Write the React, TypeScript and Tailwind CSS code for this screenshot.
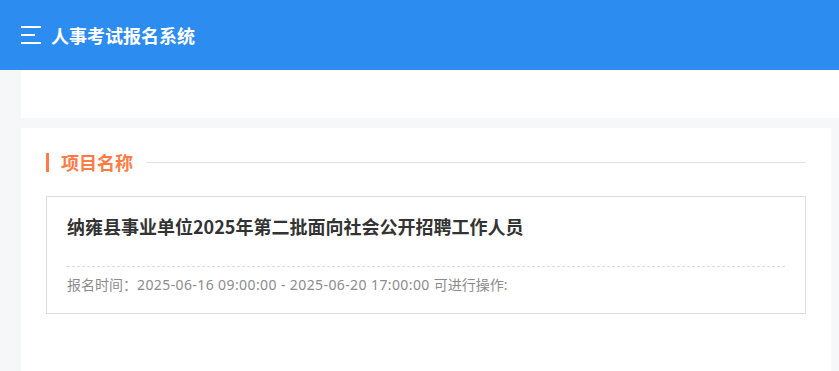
const cjk = { fontFamily: '"Noto Sans CJK SC", "Microsoft YaHei", sans-serif' };
const latinFirst = { fontFamily: '"Noto Sans", "Noto Sans CJK SC", "Microsoft YaHei", sans-serif' };

function MenuIcon() {
  return (
    <div className="flex h-[20px] w-[20px] flex-col justify-between py-[1px]">
      <span className="block h-[2px] w-[20px] bg-white" />
      <span className="block h-[2px] w-[14px] bg-white" />
      <span className="block h-[2px] w-[20px] bg-white" />
    </div>
  );
}

function App() {
  return (
    <div className="min-h-[371px] bg-[#f5f7f9]" style={cjk}>
      {/* Header */}
      <header className="flex h-[70px] items-center gap-[10px] bg-[#2d8cf0] px-[21px]">
        <MenuIcon />
        <h1 className="text-[18px] font-bold leading-none text-white">人事考试报名系统</h1>
      </header>

      <main className="pl-[21px]">
        {/* Empty top panel */}
        <div className="h-[48px] bg-white" />

        {/* Project panel */}
        <section className="mr-[8px] mt-[10px] min-h-[243px] bg-white px-[25px] pt-[24px] pb-[40px]">
          <div className="flex h-[20px] items-center">
            <span className="h-[19px] w-[3px] bg-[#ff7a45]" />
            <span className="ml-[12px] text-[18px] font-bold leading-[20px] text-[#ff7a45]">项目名称</span>
            <span className="ml-[13px] h-px flex-1 bg-[#e3e3e3]" />
          </div>

          <div className="mt-[24px] border border-[#dddddd] px-[20px] pt-[17px] pb-[18px]">
            <h2 className="text-[18px] font-bold leading-[24px] text-[#333333]">
              纳雍县事业单位2025年第二批面向社会公开招聘工作人员
            </h2>
            <div className="mt-[28px] border-t border-dashed border-[#dedede]" />
            <p className="pt-[8px] text-[14px] leading-[20px] text-[#8c8c8c]" style={latinFirst}>
              报名时间：<span className="tracking-[0.4px]">2025-06-16 09:00:00 - 2025-06-20 17:00:00 </span>可进行操作:
            </p>
          </div>
        </section>
      </main>
    </div>
  );
}

export default App;
